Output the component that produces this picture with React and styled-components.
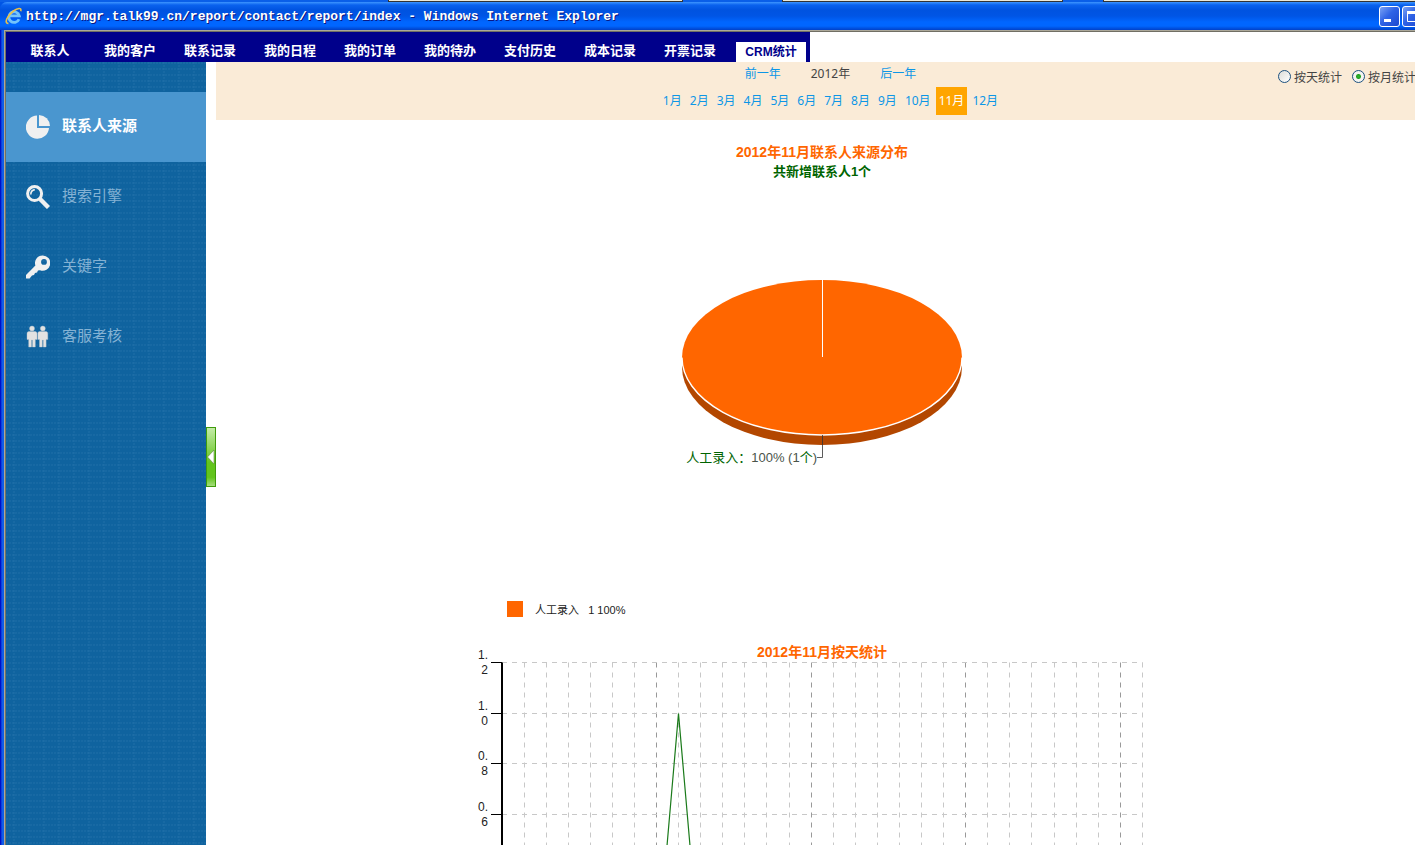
import {useState} from 'react';

import styled, {createGlobalStyle, css} from 'styled-components';

const GlobalStyle = createGlobalStyle`
	:root {
		--navy: #00008b;
		--orange: #ff6600;
		--green: #006400;
		--link: #0c96e6;
		--text: #444;
		--font: 'Liberation Sans', 'Noto Sans CJK SC', sans-serif;
		--mixed: 'Noto Sans', 'Noto Sans CJK SC', sans-serif;
	}

	* {
		box-sizing: border-box;
	}

	body {
		margin: 0;
		overflow: hidden;

		font-family: var(--font);
		font-size: 12px;
		color: var(--text);
		background: #fff;
	}

	a {
		color: inherit;
		text-decoration: none;
	}
`;

const Screen = styled.div`
	height: 100vh;
	overflow: hidden;
`;

/* The browser window hangs over the right and bottom edges of the screen */
const Window = styled.div`
	display: flex;
	flex-direction: column;

	width: calc(100vw + 13px);
	height: calc(100vh + 7px);

	background: #0055e5;
`;

const Backdrop = styled.div`
	display: flex;
	gap: 0 40px;

	height: 2px;
	padding-left: 388px;

	background: #0a5fe8;
`;

const BackdropTab = styled.div`
	flex: ${({$grow}) => $grow};
	margin-right: ${({$gap}) => $gap || 0}px;

	background: #ece9d8;
	border: solid #333;
	border-width: 0 1px 1px;
`;

const TitleBar = styled.header`
	display: flex;
	align-items: center;

	height: 28px;
	padding: 0 0 0 5px;

	background: linear-gradient(
		#3d95ff 0,
		#0a62ee 3px,
		#0053e0 8px,
		#0055e5 14px,
		#0066ff 20px,
		#0066ff 24px,
		#0040c8 28px
	);
	border-radius: 7px 0 0;

	h1 {
		flex: 1;
		margin: 0 0 0 3px;

		font-family: 'Liberation Mono', monospace;
		font-size: 13px;
		font-weight: bold;
		color: #fff;
		text-shadow: 1px 1px #0a1883;
		white-space: nowrap;
	}
`;

const WindowButtons = styled.div`
	display: flex;
	gap: 2px;

	width: 49px;
`;

const WindowButton = styled.button`
	flex: none;

	width: 21px;
	height: 21px;
	padding: 0;

	background: linear-gradient(135deg, #7ba2f4 0, #2f63e6 45%, #1c48cf 100%);
	border: 1px solid #fff;
	border-radius: 3px;

	svg {
		display: block;
	}
`;

const Frame = styled.div`
	display: flex;
	flex: 1;
	flex-direction: column;

	min-height: 0;

	background: linear-gradient(90deg, #0010c8 0, #0010c8 1px, #0831d9 1px, #166aee 3px, #0855dd 4px);
	padding-left: 4px;
`;

const Page = styled.div`
	display: flex;
	flex: 1;
	flex-direction: column;

	min-height: 0;

	background: #fff;
	border: solid #aca899;
	border-width: 1px 0 0 1px;
	box-shadow: inset 1px 1px #716f64;
	padding: 1px 0 0 1px;
`;

const Tabs = styled.nav`
	display: flex;
	align-self: flex-start;

	height: 30px;
	padding-left: 4px;

	background: var(--navy);
`;

const Tab = styled.a`
	width: 80px;
	padding-top: 9px;

	font-size: 13px;
	font-weight: bold;
	line-height: 20px;
	color: #fff;
	text-align: center;
	white-space: nowrap;

	${({$active}) =>
		$active &&
		css`
			width: 70px;
			margin: 10px 4px 0 6px;
			padding-top: 0;

			font-size: 12px;
			color: var(--navy);
			background: #fff;
		`}
`;

const Body = styled.div`
	display: flex;
	flex: 1;

	min-height: 0;
`;

const Sidebar = styled.nav`
	width: 200px;
	padding-top: 30px;

	background-color: #0f639f;
	background-image: radial-gradient(circle at 1px 1px, #2a78b0 0, transparent 1px),
		radial-gradient(circle at 1px 1px, #2a78b0 0, transparent 1px);
	background-size: 3px 6px, 15px 3px;
	background-position: 0 0, 7px 0;
`;

const SideLink = styled.a`
	display: flex;
	align-items: center;
	gap: 12px;

	height: 70px;
	padding-left: 20px;

	font-size: 15px;
	line-height: 20px;
	color: #84b2d4;

	${({$active}) =>
		$active &&
		css`
			font-weight: bold;
			color: #fff;
			background: #4a96cf;
		`}

	svg {
		flex: none;
	}

	span {
		padding-bottom: 2px;
	}
`;

const Splitter = styled.div`
	display: flex;
	align-items: center;

	width: 10px;
`;

const Collapse = styled.button`
	width: 10px;
	height: 60px;
	padding: 0;

	background: linear-gradient(#c4eba8, #62c41c 60%, #62c41c 85%, #a5de7d);
	border: 1px solid #3f9b0b;

	svg {
		display: block;
	}
`;

const Main = styled.main`
	flex: 1;

	min-width: 0;
	overflow: hidden;
`;

const Toolbar = styled.div`
	display: grid;
	grid-template-columns: 1fr auto 1fr;

	padding: 0 12px 5px 29px;

	background: #faebd7;
`;

const Period = styled.div`
	grid-column: 2;
`;

const Years = styled.div`
	display: flex;
	justify-content: center;
	gap: 30px;

	height: 25px;

	font-family: var(--mixed);
	line-height: 24px;

	a {
		color: var(--link);
	}
`;

const Months = styled.div`
	display: flex;
	justify-content: center;
	gap: 2px;

	font-family: var(--mixed);
	line-height: 28px;
`;

const Month = styled.a`
	padding: 0 3px;

	color: ${({$active}) => ($active ? '#fff' : 'var(--link)')};
	background: ${({$active}) => ($active ? 'orange' : 'none')};
`;

const Modes = styled.div`
	display: flex;
	justify-content: flex-end;
	gap: 10px;

	height: 28px;

	label {
		display: flex;
		align-items: center;
		gap: 2px;
	}
`;

const Radio = styled.input`
	appearance: none;

	width: 13px;
	height: 13px;
	margin: 0 1px 0 0;

	background: linear-gradient(135deg, #dcdcd7, #fff);
	border: 1px solid #1c5180;
	border-radius: 50%;

	&:checked {
		background: radial-gradient(circle, #2fb52f 0, #21a121 2px, #f4f4f1 3px);
	}
`;

const Charts = styled.div`
	width: 100%;
	max-width: 700px;
	margin: 0 auto;
	padding-top: 22px;
`;

const ChartTitle = styled.h2`
	margin: 0;

	font-size: 14px;
	line-height: 20px;
	color: var(--orange);
	text-align: center;
`;

const ChartNote = styled.p`
	margin: 0;

	font-size: 13px;
	font-weight: bold;
	line-height: 20px;
	color: var(--green);
	text-align: center;
`;

const Drawing = styled.svg`
	display: block;
	overflow: visible;

	width: 100%;

	font-family: var(--font);
`;

const Legend = styled.div`
	display: flex;
	align-items: center;
	gap: 12px;

	height: 16px;
	margin-bottom: 25px;
	padding-left: 35px;

	font-size: 11px;
	color: #222;

	&::before {
		content: '';

		width: 16px;
		height: 16px;

		background: var(--orange);
	}
`;

const tabs = [
	'联系人',
	'我的客户',
	'联系记录',
	'我的日程',
	'我的订单',
	'我的待办',
	'支付历史',
	'成本记录',
	'开票记录',
	'CRM统计',
];

const PieIcon = () => (
	<svg width="24" height="24" viewBox="0 0 24 24" fill="#f0f0f0">
		<path d="M11 0.6V13H23A11.6 11.6 0 1 1 11 0.6Z"/>
		<path d="M13 0A11.3 11.3 0 0 1 24 11H13Z"/>
	</svg>
);

const SearchIcon = () => (
	<svg width="24" height="24" viewBox="0 0 24 24" fill="none" stroke="#f0f0f0">
		<circle cx="8.6" cy="8.6" r="7" strokeWidth="3"/>
		<path d="M14 14L22.5 22.5" strokeWidth="4.4"/>
		<path d="M4.8 9.5C4.8 6.8 6.3 5 8.8 4.6" strokeWidth="1.6"/>
	</svg>
);

const KeyIcon = () => (
	<svg width="24" height="24" viewBox="0 0 24 24" fill="#f0f0f0">
		<path
			fillRule="evenodd"
			d="M16.5 0.5A7.6 7.6 0 1 1 14 15.2L12 15.6L11 17.5L9 18L8 20L6 20.4L3.6 23.4H0V20L9.4 10.6A7.6 7.6 0 0 1 16.5 0.5ZM18 4A2.9 2.9 0 1 0 18 9.8A2.9 2.9 0 1 0 18 4Z"
		/>
	</svg>
);

const person =
	'M6 1A2.5 2.5 0 1 1 6 6A2.5 2.5 0 1 1 6 1ZM3 6.5H9C10.6 6.5 11 7.5 11 9V14.5H9.3V22H6.5V15H5.5V22H2.7V14.5H1V9C1 7.5 1.4 6.5 3 6.5Z';

const PeopleIcon = () => (
	<svg width="24" height="24" viewBox="0 0 24 24" fill="#e2e2e2" stroke="#b9c3cb" strokeWidth="0.4">
		<path d={person}/>
		<path d={person} transform="translate(10.8 0)"/>
	</svg>
);

const ExplorerIcon = () => (
	<svg width="18" height="18" viewBox="0 0 18 18" fill="none">
		<path
			d="M14 12.2A5.3 5.3 0 1 1 14.3 8.9H5"
			stroke="#74c4fb"
			strokeWidth="2.8"
		/>
		<path
			d="M3.4 16.4C-1.2 16.8 2 8.6 8.4 4C12.5 1 16.8 0.2 15.8 4.2"
			stroke="#e9c04a"
			strokeWidth="1.6"
		/>
	</svg>
);

const sideLinks = [
	{name: '联系人来源', icon: <PieIcon/>},
	{name: '搜索引擎', icon: <SearchIcon/>},
	{name: '关键字', icon: <KeyIcon/>},
	{name: '客服考核', icon: <PeopleIcon/>},
];

const PieChart = () => (
	<Drawing viewBox="0 0 700 419" role="img" aria-label="联系人来源分布">
		<path d="M210 175V185A140 78 0 0 0 490 185V175Z" fill="#b34700"/>
		<ellipse cx="350" cy="175.5" rx="140" ry="77.5" fill="#ff6600"/>
		<path d="M210 175.5A140 77.5 0 0 0 490 175.5" fill="none" stroke="#fff" strokeWidth="1.4"/>
		<path d="M350.5 98V175" stroke="#fff"/>
		<path d="M350.5 253V275.5H345" fill="none" stroke="#333" strokeOpacity="0.8"/>
		<text x="345" y="280" textAnchor="end" fontSize="13" fill="#006400">
			人工录入：<tspan fill="#4a544a">100% (1</tspan>个<tspan fill="#4a544a">)</tspan>
		</text>
	</Drawing>
);

const DAYS = 30;
const LEFT = 30;
const STEP_X = 22.08;
const STEP_Y = 50.7;

const counts = Array.from({length: DAYS}, (_, i) => (i === 8 ? 1 : 0));
const levels = ['1.2', '1.0', '0.8', '0.6', '0.4', '0.2', '0.0'];

const dayX = i => Math.floor(LEFT + i * STEP_X) + 0.5;
const levelY = i => Math.round(i * STEP_Y) + 0.5;

const LineChart = () => (
	<Drawing viewBox="0 0 700 330" role="img" aria-label="按天统计">
		{counts.map((_, i) => (
			<path
				key={`day-${i}`}
				d={`M${dayX(i)} ${levelY(0)}V${levelY(6)}`}
				stroke={i % 7 ? '#c8c8c8' : '#999'}
				strokeDasharray="5 5"
			/>
		))}
		{levels.map((level, i) => (
			<g key={level}>
				<path
					d={`M${LEFT} ${levelY(i)}H${dayX(DAYS - 1)}`}
					stroke="#c8c8c8"
					strokeDasharray="5 5"
				/>
				<path d={`M19 ${levelY(i)}H${LEFT}`} stroke="#000"/>
				{i < 4 && (
					<text textAnchor="end" fontSize="12" fill="#222">
						<tspan x="16" y={levelY(i) - 4}>{level.slice(0, 2)}</tspan>
						<tspan x="16" y={levelY(i) + 11}>{level.slice(2)}</tspan>
					</text>
				)}
			</g>
		))}
		<path d={`M${LEFT} ${levelY(0)}V${levelY(6)}`} stroke="#000" strokeWidth="2"/>
		<polyline
			points={counts.map((n, i) => `${dayX(i)},${levelY(6 - n * 5)}`).join(' ')}
			fill="none"
			stroke="#1a7a1a"
			strokeWidth="1.2"
		/>
	</Drawing>
);

const App = () => {
	const [mode, setMode] = useState('month');

	return (
		<Screen>
			<GlobalStyle/>
			<Window>
				<Backdrop>
					<BackdropTab $grow={295} $gap={59}/>
					<BackdropTab $grow={281}/>
					<BackdropTab $grow={326}/>
				</Backdrop>
				<TitleBar>
					<ExplorerIcon/>
					<h1>http://mgr.talk99.cn/report/contact/report/index - Windows Internet Explorer</h1>
					<WindowButtons>
						<WindowButton type="button" aria-label="最小化">
							<svg width="19" height="19"><path d="M4 12H11V15H4Z" fill="#fff"/></svg>
						</WindowButton>
						<WindowButton type="button" aria-label="最大化">
							<svg width="19" height="19" fill="none" stroke="#fff">
								<path d="M4.5 5V14.5H14.5V5"/>
								<path d="M4 5.5H15" strokeWidth="3"/>
							</svg>
						</WindowButton>
					</WindowButtons>
				</TitleBar>
				<Frame>
					<Page>
						<Tabs>
							{tabs.map(name => (
								<Tab key={name} href="#" $active={name === 'CRM统计'}>
									{name}
								</Tab>
							))}
						</Tabs>
						<Body>
							<Sidebar>
								{sideLinks.map(({name, icon}, i) => (
									<SideLink key={name} href="#" $active={i === 0}>
										{icon}
										<span>{name}</span>
									</SideLink>
								))}
							</Sidebar>
							<Splitter>
								<Collapse type="button" aria-label="收起">
									<svg width="8" height="16">
										<path d="M0.5 8L7 1V15Z" fill="#fff" stroke="#5a8a3a" strokeWidth="0.6"/>
									</svg>
								</Collapse>
							</Splitter>
							<Main>
								<Toolbar>
									<Period>
										<Years>
											<a href="#">前一年</a>
											<span>2012年</span>
											<a href="#">后一年</a>
										</Years>
										<Months>
											{Array.from({length: 12}, (_, i) => (
												<Month key={i} href="#" $active={i === 10}>
													{i + 1}月
												</Month>
											))}
										</Months>
									</Period>
									<Modes>
										<label>
											<Radio
												type="radio"
												name="mode"
												checked={mode === 'day'}
												onChange={() => setMode('day')}
											/>
											按天统计
										</label>
										<label>
											<Radio
												type="radio"
												name="mode"
												checked={mode === 'month'}
												onChange={() => setMode('month')}
											/>
											按月统计
										</label>
									</Modes>
								</Toolbar>
								<Charts>
									<ChartTitle>2012年11月联系人来源分布</ChartTitle>
									<ChartNote>共新增联系人1个</ChartNote>
									<PieChart/>
									<Legend>人工录入&nbsp;&nbsp; 1 100%</Legend>
									<ChartTitle>2012年11月按天统计</ChartTitle>
									<LineChart/>
								</Charts>
							</Main>
						</Body>
					</Page>
				</Frame>
			</Window>
		</Screen>
	);
};

export default App;
